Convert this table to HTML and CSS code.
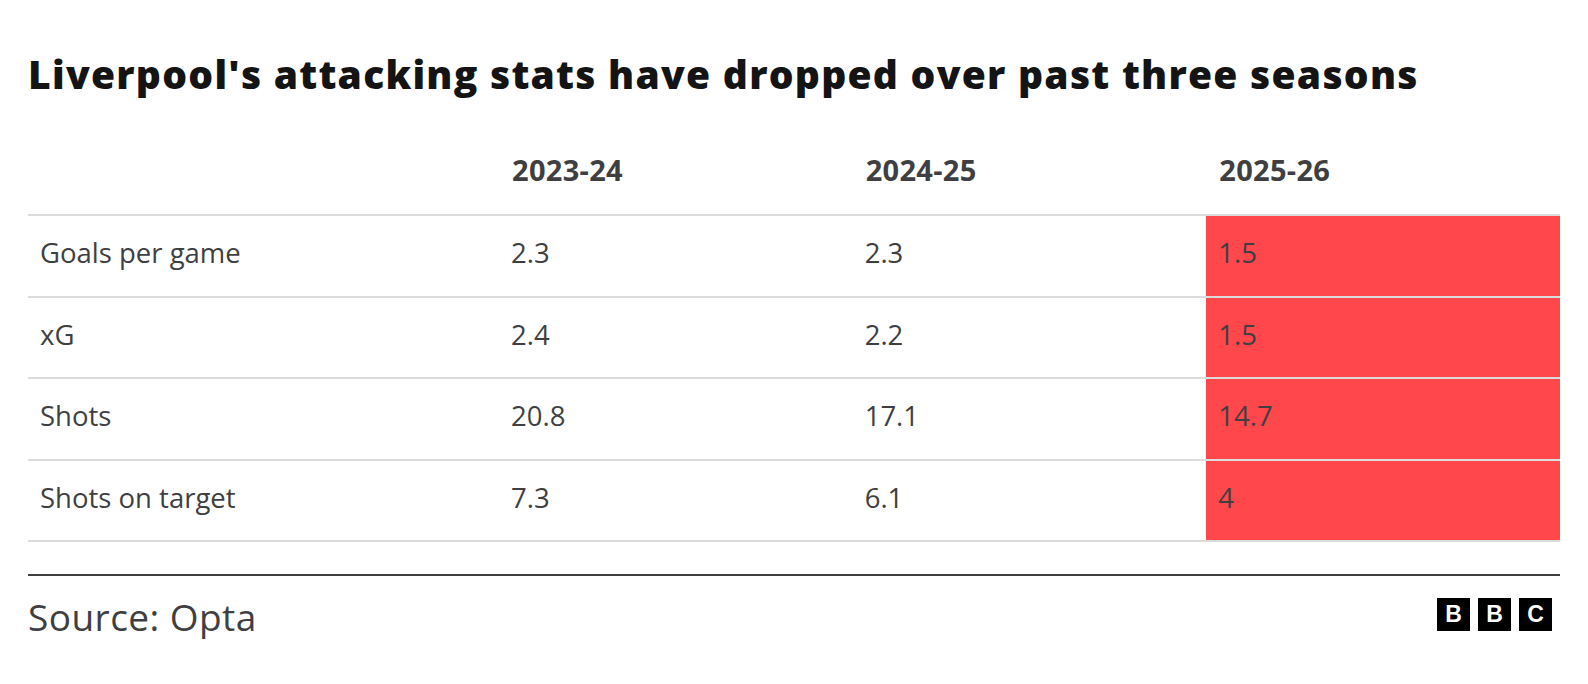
FILE: index.html
```html
<!DOCTYPE html>
<html lang="en">
<head>
<meta charset="utf-8">
<title>Liverpool's attacking stats</title>
<link rel="stylesheet" href="styles.css">
</head>
<body>
<main class="chart">
  <h1 class="title">Liverpool's attacking stats have dropped over past three seasons</h1>
  <div class="table">
    <div class="cell head"></div>
    <div class="cell head">2023-24</div>
    <div class="cell head">2024-25</div>
    <div class="cell head">2025-26</div>

    <div class="cell">Goals per game</div>
    <div class="cell">2.3</div>
    <div class="cell">2.3</div>
    <div class="cell hot">1.5</div>

    <div class="cell">xG</div>
    <div class="cell">2.4</div>
    <div class="cell">2.2</div>
    <div class="cell hot">1.5</div>

    <div class="cell">Shots</div>
    <div class="cell">20.8</div>
    <div class="cell">17.1</div>
    <div class="cell hot">14.7</div>

    <div class="cell">Shots on target</div>
    <div class="cell">7.3</div>
    <div class="cell">6.1</div>
    <div class="cell hot">4</div>
  </div>
  <footer class="footer">
    <span class="source">Source: Opta</span>
    <span class="logo" aria-label="BBC">
      <span class="block">B</span><span class="block">B</span><span class="block">C</span>
    </span>
  </footer>
</main>
</body>
</html>
```
FILE: styles.css
```css
* { box-sizing: border-box; }
html, body { margin: 0; padding: 0; background: #ffffff; }
body { font-family: "Open Sans", "Noto Sans", sans-serif; color: #3f3f42; }

.chart {
  width: 1588px;
  padding: 50px 28px 0 28px;
}

.title {
  margin: 0;
  font-family: "Open Sans", sans-serif;
  font-weight: 800;
  font-size: 39px;
  line-height: 48px;
  color: #141414;
  letter-spacing: 1.25px;
  white-space: nowrap;
}

.table {
  margin-top: 54px;
  display: grid;
  grid-template-columns: 471px 1fr 1fr 1fr;
}

.cell {
  padding: 20px 0 0 12px;
  font-size: 27.5px;
  line-height: 34px;
  color: #3f3f42;
  border-bottom: 2px solid #dcdcdc;
  height: 81.5px;
}

.cell.head {
  padding: 0 0 26px 13px;
  font-weight: 700;
  font-size: 29px;
  line-height: 36px;
  height: 64px;
  color: #3f3f42;
  letter-spacing: 0.3px;
}

.cell.hot {
  background: #ff474c;
  background-clip: padding-box;
}

.footer {
  margin-top: 32px;
  border-top: 2px solid #3f3f42;
  display: flex;
  justify-content: space-between;
  align-items: flex-start;
  padding-top: 19px;
}

.source {
  font-size: 37px;
  line-height: 44px;
  letter-spacing: 0.45px;
  color: #3f3f42;
}

.logo {
  display: flex;
  gap: 8px;
  margin-top: 3px;
  margin-right: 8px;
}

.block {
  width: 33px;
  height: 33px;
  background: #000000;
  color: #ffffff;
  font-family: "Liberation Sans", Arial, sans-serif;
  font-weight: 700;
  font-size: 23px;
  line-height: 33px;
  text-align: center;
}
```
